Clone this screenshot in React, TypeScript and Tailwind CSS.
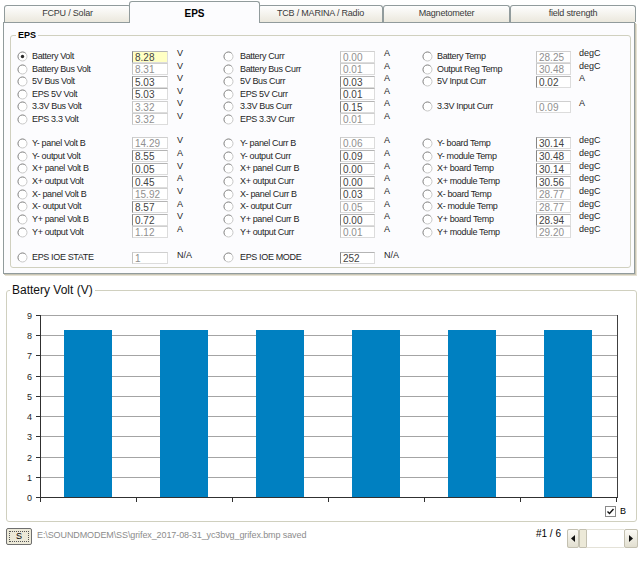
import React from "react";

type Cell = {
  label: string;
  value: string;
  unit: string;
  dim?: boolean;
  sel?: boolean;
  hi?: boolean;
} | null;

const c = (label: string, value: string, unit: string, dim?: boolean, extra?: { sel?: boolean; hi?: boolean }): Cell => ({
  label,
  value,
  unit,
  dim,
  ...extra,
});

// top block of the EPS page
const topRows: Cell[][] = [
  [c("Battery Volt", "8.28", "V", false, { sel: true, hi: true }), c("Battery Curr", "0.00", "A", true), c("Battery Temp", "28.25", "degC", true)],
  [c("Battery Bus Volt", "8.31", "V", true), c("Battery Bus Curr", "0.01", "A", true), c("Output Reg Temp", "30.48", "degC", true)],
  [c("5V Bus Volt", "5.03", "V"), c("5V Bus Curr", "0.03", "A"), c("5V Input Curr", "0.02", "A")],
  [c("EPS 5V Volt", "5.03", "V"), c("EPS 5V Curr", "0.01", "A"), null],
  [c("3.3V Bus Volt", "3.32", "V", true), c("3.3V Bus Curr", "0.15", "A"), c("3.3V Input Curr", "0.09", "A", true)],
  [c("EPS 3.3 Volt", "3.32", "V", true), c("EPS 3.3V Curr", "0.01", "A", true), null],
];

// solar panel block
const panelRows: Cell[][] = [
  [c("Y- panel Volt B", "14.29", "V", true), c("Y- panel Curr B", "0.06", "A", true), c("Y- board Temp", "30.14", "degC")],
  [c("Y- output Volt", "8.55", "A"), c("Y- output Curr", "0.09", "A"), c("Y- module Temp", "30.48", "degC")],
  [c("X+ panel Volt B", "0.05", "V"), c("X+ panel Curr B", "0.00", "A"), c("X+ board Temp", "30.14", "degC")],
  [c("X+ output Volt", "0.45", "A"), c("X+ output Curr", "0.00", "A"), c("X+ module Temp", "30.56", "degC")],
  [c("X- panel Volt B", "15.92", "V", true), c("X- panel Curr B", "0.03", "A"), c("X- board Temp", "28.77", "degC", true)],
  [c("X- output Volt", "8.57", "A"), c("X- output Curr", "0.05", "A", true), c("X- module Temp", "28.77", "degC", true)],
  [c("Y+ panel Volt B", "0.72", "V"), c("Y+ panel Curr B", "0.00", "A"), c("Y+ board Temp", "28.94", "degC")],
  [c("Y+ output Volt", "1.12", "A", true), c("Y+ output Curr", "0.01", "A", true), c("Y+ module Temp", "29.20", "degC", true)],
];

const ioeRow: Cell[] = [c("EPS IOE STATE", "1", "N/A", true), c("EPS IOE MODE", "252", "N/A"), null];

const tabs = [
  { label: "FCPU / Solar", w: "w-[127px]" },
  { label: "EPS", w: "w-[131px]", sel: true },
  { label: "TCB / MARINA / Radio", w: "w-[125px]" },
  { label: "Magnetometer", w: "w-[127px]" },
  { label: "field strength", w: "w-[126px]" },
];

const labelPads = ["pl-[6px] gap-[4px]", "gap-[6px]", "gap-[4px]"];
const unitPads = ["pl-[9px]", "pl-[9px]", "pl-[8px]"];

const Radio = ({ checked }: { checked?: boolean }) => (
  <svg width="11" height="11" viewBox="0 0 11 11" className="shrink-0">
    <circle cx="5.5" cy="5.5" r="4.5" fill="#fff" stroke="#c8c8c8" />
    <path d="M2.3 8.7 A4.5 4.5 0 0 1 8.7 2.3" fill="none" stroke="#959595" />
    {checked && <circle cx="5.5" cy="5.5" r="1.7" fill="#2a2a2a" />}
  </svg>
);

const ValueBox = ({ cell }: { cell: NonNullable<Cell> }) => (
  <div
    className={`h-[12px] overflow-hidden border border-r-[#dcdcdc] border-b-[#dcdcdc] pl-[2px] text-[10px] leading-[11px] ${
      cell.dim
        ? "border-t-[#cfcfcf] border-l-[#c4c4c4] text-[#909090]"
        : "border-t-[#b4b4b4] border-l-[#858585] text-[#444444]"
    } ${cell.hi ? "bg-[#ffffc4]" : "bg-white"}`}
  >
    {cell.value}
  </div>
);

const Row = ({ cells, h }: { cells: Cell[]; h: string }) => (
  <div className={`grid grid-cols-[121px_36px_55px_117px_35px_47px_114px_35px_1fr] items-center ${h}`}>
    {cells.map((cell, i) =>
      cell ? (
        <React.Fragment key={i}>
          <div className={`flex items-center ${labelPads[i]}`}>
            <Radio checked={cell.sel} />
            <span className="whitespace-nowrap text-[9px] leading-[11px] tracking-[-0.35px] text-[#1e1e1e]">
              {cell.label}
            </span>
          </div>
          <ValueBox cell={cell} />
          <span className={`mt-[-1px] self-start text-[9px] leading-[9px] text-[#1e1e1e] ${unitPads[i]}`}>
            {cell.unit}
          </span>
        </React.Fragment>
      ) : (
        <React.Fragment key={i}>
          <div />
          <div />
          <div />
        </React.Fragment>
      )
    )}
  </div>
);

const Chart = () => {
  const y0 = 200;
  const step = 20.22;
  const ys = Array.from({ length: 10 }, (_, k) => Math.round(y0 - k * step));
  const barTop = Math.round(y0 - 8.28 * step);
  return (
    <svg width="629" height="208" className="block">
      {ys.slice(1).map((y) => (
        <line key={y} x1={33} x2={610} y1={y + 0.5} y2={y + 0.5} stroke="#a4a4a4" />
      ))}
      {[0, 1, 2, 3, 4, 5].map((i) => (
        <rect key={i} x={57 + i * 96} y={barTop} width={48} height={y0 - barTop} fill="#0080c1" />
      ))}
      <line x1={610.5} x2={610.5} y1={18} y2={200} stroke="#404040" />
      <line x1={33.5} x2={33.5} y1={18} y2={205} stroke="#303030" />
      <line x1={29} x2={611} y1={200.5} y2={200.5} stroke="#303030" />
      {ys.map((y, k) => (
        <g key={k}>
          <line x1={29} x2={33} y1={y + 0.5} y2={y + 0.5} stroke="#303030" />
          <text x={25} y={y + 3.5} textAnchor="end" fontSize="9" fill="#1e1e1e">
            {k}
          </text>
        </g>
      ))}
      {[1, 2, 3, 4, 5, 6].map((i) => (
        <line key={i} x1={33.5 + i * 96} x2={33.5 + i * 96} y1={200} y2={205} stroke="#303030" />
      ))}
    </svg>
  );
};

const Arrow = ({ dir }: { dir: "l" | "r" }) => (
  <svg width="4" height="7" viewBox="0 0 4 7">
    <path d={dir === "l" ? "M4 0 L0 3.5 L4 7 Z" : "M0 0 L4 3.5 L0 7 Z"} fill="#111" />
  </svg>
);

export default function App() {
  return (
    <div className="h-[567px] w-[640px] overflow-hidden bg-white font-['Liberation_Sans',Arial,sans-serif] text-black">
      {/* tab strip */}
      <div className="flex h-[22px] items-end pl-[4px]">
        {tabs.map((t) =>
          t.sel ? (
            <div
              key={t.label}
              className={`relative z-10 mx-[-2px] mb-[-1px] flex h-[22px] items-center justify-center rounded-t-[3px] border border-b-0 border-[#919b9c] bg-[#fcfcfe] pt-[2px] text-[10px] font-bold ${t.w}`}
            >
              {t.label}
            </div>
          ) : (
            <div
              key={t.label}
              className={`flex h-[17px] items-center justify-center rounded-t-[3px] border border-b-0 border-[#919b9c] bg-gradient-to-b from-[#fefefe] to-[#ebe8dd] text-[9px] tracking-[-0.2px] text-[#3a3a3a] ${t.w}`}
            >
              {t.label}
            </div>
          )
        )}
      </div>

      {/* tab page */}
      <div className="ml-[3px] h-[252px] w-[632px] border border-[#919b9c] bg-[#fcfcfe] pl-[6px] pr-[3px] pt-[6px] shadow-[1px_1px_0_#c9c5b4,2px_2px_0_#e6e2d4]">
        <fieldset className="h-[239px] rounded-[3px] border border-[#d0d0bf]">
          <legend className="ml-[5px] px-[2px] text-[9px] font-bold leading-[12px]">EPS</legend>
          <div className="pt-[9.25px]">
            {topRows.map((r, i) => (
              <Row key={i} cells={r} h="h-[12.5px]" />
            ))}
          </div>
          <div className="mt-[11.9px]">
            {panelRows.map((r, i) => (
              <Row key={i} cells={r} h="h-[12.7px]" />
            ))}
          </div>
          <div className="mt-[12.9px]">
            <Row cells={ioeRow} h="h-[12.7px]" />
          </div>
        </fieldset>
      </div>

      {/* chart */}
      <fieldset className="ml-[6px] mt-[9px] w-[631px] rounded-[3px] border border-[#d0d0bf] pb-[4px]">
        <legend className="ml-[3px] px-[2px] text-[12px] leading-[14px] text-[#111]">Battery Volt (V)</legend>
        <Chart />
        <div className="flex h-[12px] items-center justify-end gap-[4px] pr-[10px]">
          <svg width="11" height="11" viewBox="0 0 11 11">
            <rect x="0.5" y="0.5" width="10" height="10" fill="#fff" stroke="#8a8a8a" />
            <path d="M2.5 5.5 L4.5 7.5 L8.5 3" fill="none" stroke="#111" strokeWidth="1.4" />
          </svg>
          <span className="text-[9px] leading-[11px]">B</span>
        </div>
      </fieldset>

      {/* status bar */}
      <div className="mt-[6px] flex items-start">
        <button className="ml-[6px] flex h-[17px] w-[26px] items-center justify-center rounded-[2px] border border-[#6f6f6f] bg-[#ece9d8] p-[2px]">
          <span className="flex h-full w-full items-center justify-center border border-dotted border-[#555] text-[9px] leading-[9px]">
            S
          </span>
        </button>
        <span className="ml-[5px] mt-[1px] text-[9px] leading-[12px] tracking-[-0.1px] text-[#8c8c8c]">
          E:\SOUNDMODEM\SS\grifex_2017-08-31_yc3bvg_grifex.bmp saved
        </span>
        <div className="flex-1" />
        <span className="mr-[6px] text-[10px] leading-[12px]">#1 / 6</span>
        <div className="mr-[2px] mt-[1px] flex h-[19px] w-[71px] bg-[#f5f4ef]">
          <div className="flex w-[12px] items-center justify-center rounded-[2px] border border-[#c3c0b0] bg-gradient-to-b from-[#fbfaf5] to-[#e2dfd0]">
            <Arrow dir="l" />
          </div>
          <div className="w-[8px] rounded-[1px] border border-[#c3c0b0] bg-[#ece9d8]" />
          <div className="flex-1 border-y border-[#e4e2d8] bg-white" />
          <div className="flex w-[14px] items-center justify-center rounded-[2px] border border-[#c3c0b0] bg-gradient-to-b from-[#fbfaf5] to-[#e2dfd0]">
            <Arrow dir="r" />
          </div>
        </div>
      </div>
    </div>
  );
}
